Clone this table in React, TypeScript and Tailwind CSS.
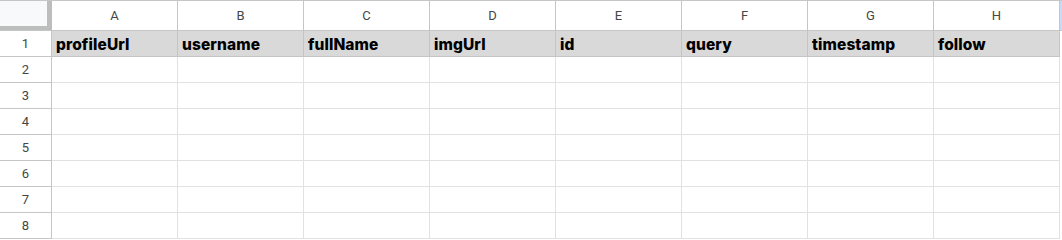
import React from 'react';

const columns = ['A', 'B', 'C', 'D', 'E', 'F', 'G', 'H'];
const fields = ['profileUrl', 'username', 'fullName', 'imgUrl', 'id', 'query', 'timestamp', 'follow'];
const rows = [2, 3, 4, 5, 6, 7, 8];

export default function App() {
  return (
    <div className="w-[1062px] h-[240px] overflow-hidden bg-white font-['Roboto',sans-serif]">
      {/* Column letters */}
      <div className="flex h-[31px] border-t border-b border-[#c4c7c5]">
        <div className="w-[52px] shrink-0 bg-[#bdbdbd]">
          <div className="w-[47px] h-[25px] bg-[#f8f9fa]" />
        </div>
        {columns.map((c) => (
          <div
            key={c}
            className="w-[126px] shrink-0 border-r border-[#c4c7c5] flex items-center justify-center text-[13px] text-[#444746]"
          >
            {c}
          </div>
        ))}
        <div className="w-[2px] shrink-0 bg-[#c9daf8]" />
      </div>

      {/* Header row */}
      <div className="flex h-[26px]">
        <div className="w-[52px] shrink-0 border-r border-b border-[#c4c7c5] flex items-center justify-center text-[13px] text-[#444746]">
          1
        </div>
        {fields.map((f) => (
          <div
            key={f}
            className="w-[126px] shrink-0 bg-[#d9d9d9] border-r border-b border-[#c4c4c4] flex items-center pl-[4px] pt-[3px] text-[15.5px] font-extrabold text-black font-['Inter',sans-serif] tracking-[0.1px]"
          >
            {f}
          </div>
        ))}
      </div>

      {/* Empty rows */}
      {rows.map((r) => (
        <div key={r} className="flex h-[26px]">
          <div className="w-[52px] shrink-0 border-r border-b border-[#c4c7c5] flex items-center justify-center text-[13px] text-[#444746]">
            {r}
          </div>
          {columns.map((c) => (
            <div key={c} className="w-[126px] shrink-0 border-r border-b border-[#e1e1e1]" />
          ))}
        </div>
      ))}
    </div>
  );
}
